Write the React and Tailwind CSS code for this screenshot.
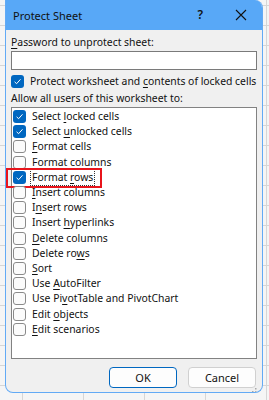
import React from "react";

const items = [
  { pre: "Select ", u: "l", post: "ocked cells", checked: true },
  { pre: "Select ", u: "u", post: "nlocked cells", checked: true },
  { pre: "", u: "F", post: "ormat cells" },
  { pre: "Format columns", u: "", post: "" },
  { pre: "Format ", u: "r", post: "ows", checked: true, focus: true },
  { pre: "", u: "I", post: "nsert columns" },
  { pre: "I", u: "n", post: "sert rows" },
  { pre: "Insert ", u: "h", post: "yperlinks" },
  { pre: "", u: "D", post: "elete columns" },
  { pre: "Delete ro", u: "w", post: "s" },
  { pre: "", u: "S", post: "ort" },
  { pre: "Use ", u: "A", post: "utoFilter" },
  { pre: "Use Pi", u: "v", post: "otTable and PivotChart" },
  { pre: "Edit ", u: "o", post: "bjects" },
  { pre: "", u: "E", post: "dit scenarios" },
];

function Box({ checked }) {
  return checked ? (
    <span className="flex h-[13px] w-[13px] shrink-0 items-center justify-center rounded-[3px] bg-[#0067c0]">
      <svg width="9" height="9" viewBox="0 0 9 9">
        <path d="M1.6 4.8 L3.6 6.7 L7.5 2.3" fill="none" stroke="#fff" strokeWidth="1" />
      </svg>
    </span>
  ) : (
    <span className="h-[13px] w-[13px] shrink-0 rounded-[3px] border border-[#8a8a8a] bg-[#fbfbfb]" />
  );
}

export default function App() {
  return (
    <div
      className="h-[400px] w-[269px] overflow-hidden bg-[#f5f5f5] bg-[linear-gradient(to_right,#d6d6d6_1px,transparent_1px),linear-gradient(to_bottom,#d6d6d6_1px,transparent_1px)] bg-[length:61px_20px] bg-[position:22px_5px]"
      style={{ fontFamily: '"Noto Sans", "Open Sans", sans-serif' }}
    >
      <div className="ml-[5px] flex h-[393px] w-[258px] flex-col overflow-hidden rounded-b-[8px] rounded-tr-[8px] border border-t-0 border-[#62aaf5] bg-[#f0f0f0] text-[10.4px] leading-none text-[#111]">
        {/* title bar */}
        <div className="flex h-[30px] shrink-0 items-center bg-[#58a8f7] pl-[7px]">
          <span className="text-[11px] text-[#111]">Protect Sheet</span>
          <span className="ml-auto mr-[32px] text-[12px] font-semibold text-[#111]">?</span>
          <svg className="mr-[15px]" width="12" height="12" viewBox="0 0 12 12">
            <path d="M1 1 L11 11 M11 1 L1 11" stroke="#111" strokeWidth="1.1" />
          </svg>
        </div>

        <div className="flex flex-1 flex-col px-[5px]">
          <div className="mt-[5px] h-[14px] leading-[14px]">
            <span className="underline underline-offset-2">P</span>assword to unprotect sheet:
          </div>
          <div className="mt-[2px] h-[19px] border border-[#7a7a7a] bg-white" />
          <div className="mt-[4px] flex h-[15px] items-center gap-[6px]">
            <Box checked />
            <span className="whitespace-nowrap leading-[15px]">
              Protect worksheet and <span className="underline underline-offset-2">c</span>ontents of locked cells
            </span>
          </div>
          <div className="mt-[2px] h-[14px] leading-[14px]">Allow all users of this worksheet to:</div>
          <div className="mt-[2px] flex h-[252px] flex-col border border-[#828282] bg-white pt-[1px]">
            {items.map((it, i) => (
              <div key={i} className="relative flex h-[15.2px] items-center gap-[6px] pl-[1px]">
                <Box checked={it.checked} />
                <span
                  className={
                    "whitespace-nowrap leading-[13px] " +
                    (it.focus ? "outline outline-1 outline-dotted outline-[#333] outline-offset-[1px]" : "")
                  }
                >
                  {it.pre}
                  {it.u && <span className="underline underline-offset-2">{it.u}</span>}
                  {it.post}
                </span>
                {it.focus && (
                  <span className="pointer-events-none absolute left-[-6px] top-[-2px] h-[20px] w-[96px] border-2 border-[#e8141b]" />
                )}
              </div>
            ))}
          </div>
          <div className="mt-[8px] flex justify-end gap-[11px] pr-[1px]">
            <button className="h-[21px] w-[68px] rounded-[4px] border border-[#0067c0] bg-[#fdfdfd] text-[11px] leading-none text-[#111]">
              OK
            </button>
            <button className="h-[21px] w-[68px] rounded-[4px] border border-[#d0d0d0] bg-[#fdfdfd] text-[11px] leading-none text-[#111]">
              Cancel
            </button>
          </div>
          <div className="mt-auto flex justify-end pb-[1px]">
            <svg width="8" height="8" viewBox="0 0 8 8" fill="#a8a8a8">
              <rect x="6" y="0" width="1.5" height="1.5" />
              <rect x="3" y="3" width="1.5" height="1.5" />
              <rect x="6" y="3" width="1.5" height="1.5" />
              <rect x="0" y="6" width="1.5" height="1.5" />
              <rect x="3" y="6" width="1.5" height="1.5" />
              <rect x="6" y="6" width="1.5" height="1.5" />
            </svg>
          </div>
        </div>
      </div>
    </div>
  );
}
